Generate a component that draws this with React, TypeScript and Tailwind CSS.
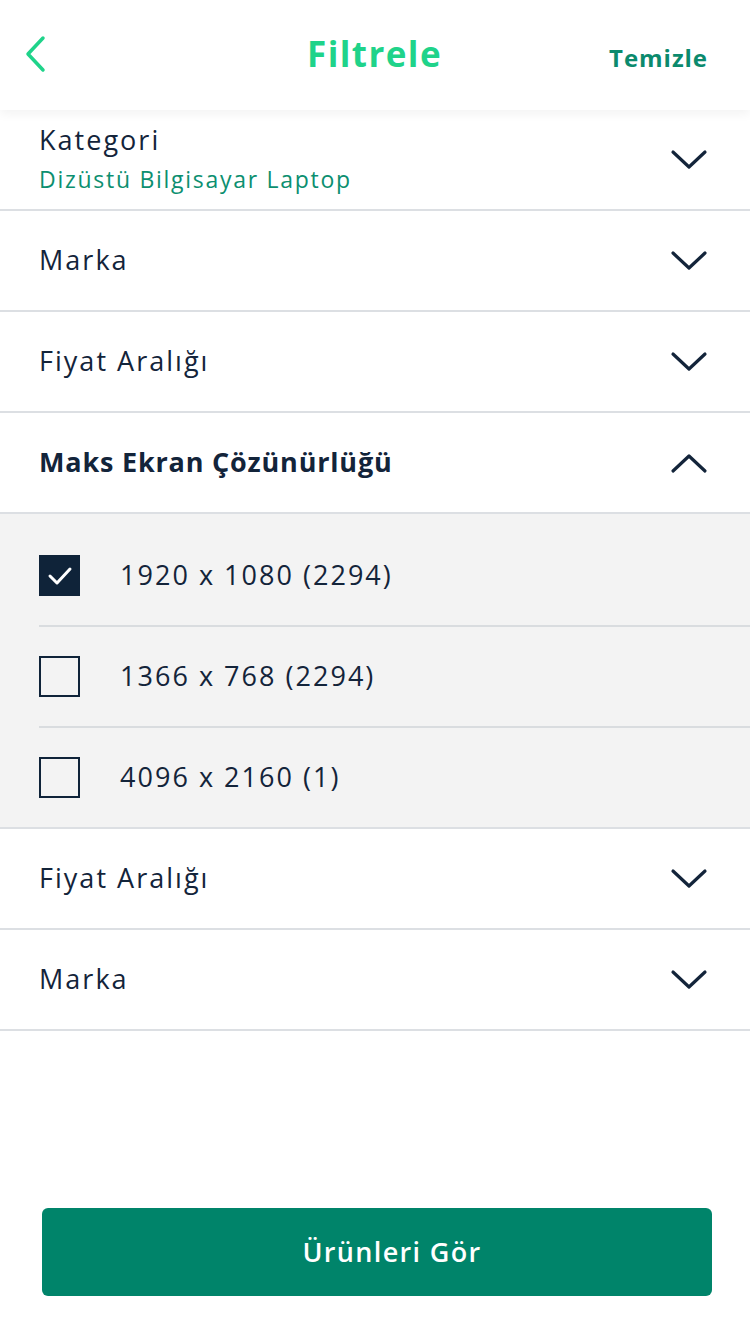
import React from "react";

const Chevron = ({ up = false }: { up?: boolean }) => (
  <svg width="38" height="22" viewBox="0 0 38 22" fill="none" className="shrink-0">
    <path
      d={up ? "M3 19 L19 4 L35 19" : "M3 3 L19 18 L35 3"}
      stroke="#13243a"
      strokeWidth="3.2"
      strokeLinecap="round"
      strokeLinejoin="round"
    />
  </svg>
);

const Row = ({ label, bold = false, up = false }: { label: string; bold?: boolean; up?: boolean }) => (
  <div className="h-[101px] border-b-2 border-[#dcdfe3] flex items-center justify-between pl-[39px] pr-[42px]">
    <span className={`text-[27px] text-[#13243a] ${bold ? "font-bold tracking-[0.03em]" : "tracking-[0.075em]"}`}>{label}</span>
    <Chevron up={up} />
  </div>
);

const Option = ({ label, checked = false, last = false }: { label: string; checked?: boolean; last?: boolean }) => (
  <div className="pl-[39px]">
    <div className={`flex items-center ${last ? "h-[99px]" : "h-[101px] border-b-2 border-[#d9dcdf]"}`}>
      {checked ? (
        <div className="w-[41px] h-[41px] bg-[#0f2339] flex items-center justify-center">
          <svg width="26" height="22" viewBox="0 0 26 22" fill="none">
            <path d="M3 11 L10 18 L23 4" stroke="white" strokeWidth="3" strokeLinecap="round" strokeLinejoin="round" />
          </svg>
        </div>
      ) : (
        <div className="w-[41px] h-[41px] border-2 border-[#0f2339]" />
      )}
      <span className="ml-[40px] text-[27px] tracking-[0.075em] text-[#13243a]">{label}</span>
    </div>
  </div>
);

export default function App() {
  return (
    <div className="w-[750px] h-[1334px] bg-white flex flex-col" style={{ fontFamily: "'Open Sans', sans-serif" }}>
      <div className="h-[110px] shrink-0 flex items-center justify-between px-[24px] shadow-[0_4px_10px_rgba(0,0,0,0.05)] relative z-10">
        <svg width="22" height="38" viewBox="0 0 22 38" fill="none" className="mb-[2px]">
          <path d="M19 3 L4 19 L19 35" stroke="#1fd38a" strokeWidth="3.5" strokeLinecap="round" strokeLinejoin="round" />
        </svg>
        <span className="text-[35px] font-bold tracking-[0.04em] text-[#1fd38a] ml-[94px] -mt-[2px]">Filtrele</span>
        <span className="text-[24px] font-bold tracking-[0.04em] text-[#0b8a6d] mr-[18px] mt-[6px]">Temizle</span>
      </div>

      <div className="h-[101px] border-b-2 border-[#dcdfe3] flex items-center justify-between pl-[39px] pr-[42px]">
        <div className="flex flex-col -mt-[2px]">
          <span className="text-[27px] leading-[36px] tracking-[0.075em] text-[#13243a]">Kategori</span>
          <span className="text-[23px] leading-[34px] mt-[4px] tracking-[0.075em] text-[#0c8f70]">Dizüstü Bilgisayar Laptop</span>
        </div>
        <Chevron />
      </div>
      <Row label="Marka" />
      <Row label="Fiyat Aralığı" />
      <Row label="Maks Ekran Çözünürlüğü" bold up />

      <div className="bg-[#f3f3f3] border-b-2 border-[#dcdfe3] pt-[12px]">
        <Option label="1920 x 1080 (2294)" checked />
        <Option label="1366 x 768 (2294)" />
        <Option label="4096 x 2160 (1)" last />
      </div>

      <Row label="Fiyat Aralığı" />
      <Row label="Marka" />

      <div className="flex-1" />
      <div className="pl-[42px] pr-[38px] pb-[38px]">
        <button className="w-full h-[88px] rounded-[6px] bg-[#00846a] text-white text-[27px] font-semibold tracking-[0.05em] pl-[30px]">
          Ürünleri Gör
        </button>
      </div>
    </div>
  );
}
